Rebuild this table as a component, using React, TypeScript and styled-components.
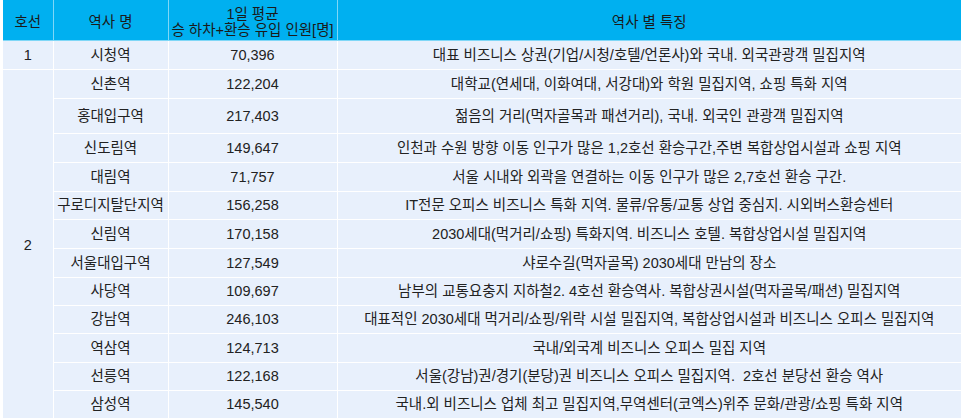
import * as React from 'react'
import styled, { createGlobalStyle } from 'styled-components'

const GlobalStyle = createGlobalStyle`
  html, body {
    margin: 0;
    padding: 0;
    background: #FFF;
  }
  body {
    font-family: "Liberation Sans", "Noto Sans CJK KR", sans-serif;
    color: #222;
  }
`

const Page = styled.div`
  width: 966px;
  height: 419px;
  padding-left: 3px;
  box-sizing: border-box;
  overflow: hidden;
`

const Table = styled.table`
  width: 958px;
  table-layout: fixed;
  border-collapse: collapse;
  font-size: 14.5px;
  line-height: 16px;
`

const HeadRow = styled.tr`
  height: 40px;
`

const HeadCell = styled.th`
  background: #00B0F0;
  color: #1A1A1A;
  font-weight: normal;
  padding: 5px 0 0;
  text-align: center;
  vertical-align: middle;
  border: 1px solid #7FD7F7;
  border-top: none;
  &:first-child { border-left: none; }
  &:last-child { border-right: none; }
`

const Row = styled.tr<{ $h: number }>`
  height: ${p => p.$h}px;
`

const Cell = styled.td`
  background: #E8F0FC;
  padding: 0;
  text-align: center;
  vertical-align: middle;
  white-space: nowrap;
  border: 1.5px solid #FFF;
  &:first-child { border-left: none; }
  &:last-child { border-right: none; }
`

const LineCell = styled(Cell)`
  padding-top: 2px;
`

type Station = { name: string, riders: string, note: string, h: number }

const line2: Station[] = [
  { name: '신촌역', riders: '122,204', note: '대학교(연세대, 이화여대, 서강대)와 학원 밀집지역, 쇼핑 특화 지역', h: 29 },
  { name: '홍대입구역', riders: '217,403', note: '젊음의 거리(먹자골목과 패션거리), 국내. 외국인 관광객 밀집지역', h: 35 },
  { name: '신도림역', riders: '149,647', note: '인천과 수원 방향 이동 인구가 많은 1,2호선 환승구간,주변 복합상업시설과 쇼핑 지역', h: 29 },
  { name: '대림역', riders: '71,757', note: '서울 시내와 외곽을 연결하는 이동 인구가 많은 2,7호선 환승 구간.', h: 29 },
  { name: '구로디지탈단지역', riders: '156,258', note: 'IT전문 오피스 비즈니스 특화 지역. 물류/유통/교통 상업 중심지. 시외버스환승센터', h: 28 },
  { name: '신림역', riders: '170,158', note: '2030세대(먹거리/쇼핑) 특화지역. 비즈니스 호텔. 복합상업시설 밀집지역', h: 29 },
  { name: '서울대입구역', riders: '127,549', note: '샤로수길(먹자골목) 2030세대 만남의 장소', h: 29 },
  { name: '사당역', riders: '109,697', note: '남부의 교통요충지 지하철2. 4호선 환승역사. 복합상권시설(먹자골목/패션) 밀집지역', h: 28 },
  { name: '강남역', riders: '246,103', note: '대표적인 2030세대 먹거리/쇼핑/위락 시설 밀집지역, 복합상업시설과 비즈니스 오피스 밀집지역', h: 28 },
  { name: '역삼역', riders: '124,713', note: '국내/외국계 비즈니스 오피스 밀집 지역', h: 29 },
  { name: '선릉역', riders: '122,168', note: '서울(강남)권/경기(분당)권 비즈니스 오피스 밀집지역.\u00a0 2호선 분당선 환승 역사', h: 28 },
  { name: '삼성역', riders: '145,540', note: '국내.외 비즈니스 업체 최고 밀집지역,무역센터(코엑스)위주 문화/관광/쇼핑 특화 지역', h: 28 },
]

export default function App() {
  return <Page>
    <GlobalStyle />
    <Table>
      <colgroup>
        <col style={{ width: 50 }} />
        <col style={{ width: 115 }} />
        <col style={{ width: 169 }} />
        <col style={{ width: 624 }} />
      </colgroup>
      <thead>
        <HeadRow>
          <HeadCell>호선</HeadCell>
          <HeadCell>역사 명</HeadCell>
          <HeadCell>1일 평균<br />승 하차+환승 유입 인원[명]</HeadCell>
          <HeadCell>역사 별 특징</HeadCell>
        </HeadRow>
      </thead>
      <tbody>
        <Row $h={29}>
          <Cell>1</Cell>
          <Cell>시청역</Cell>
          <Cell>70,396</Cell>
          <Cell>대표 비즈니스 상권(기업/시청/호텔/언론사)와 국내. 외국관광객 밀집지역</Cell>
        </Row>
        {line2.map((s, i) => <Row key={s.name} $h={s.h}>
          {i === 0 && <LineCell rowSpan={line2.length}>2</LineCell>}
          <Cell>{s.name}</Cell>
          <Cell>{s.riders}</Cell>
          <Cell>{s.note}</Cell>
        </Row>)}
      </tbody>
    </Table>
  </Page>
}
